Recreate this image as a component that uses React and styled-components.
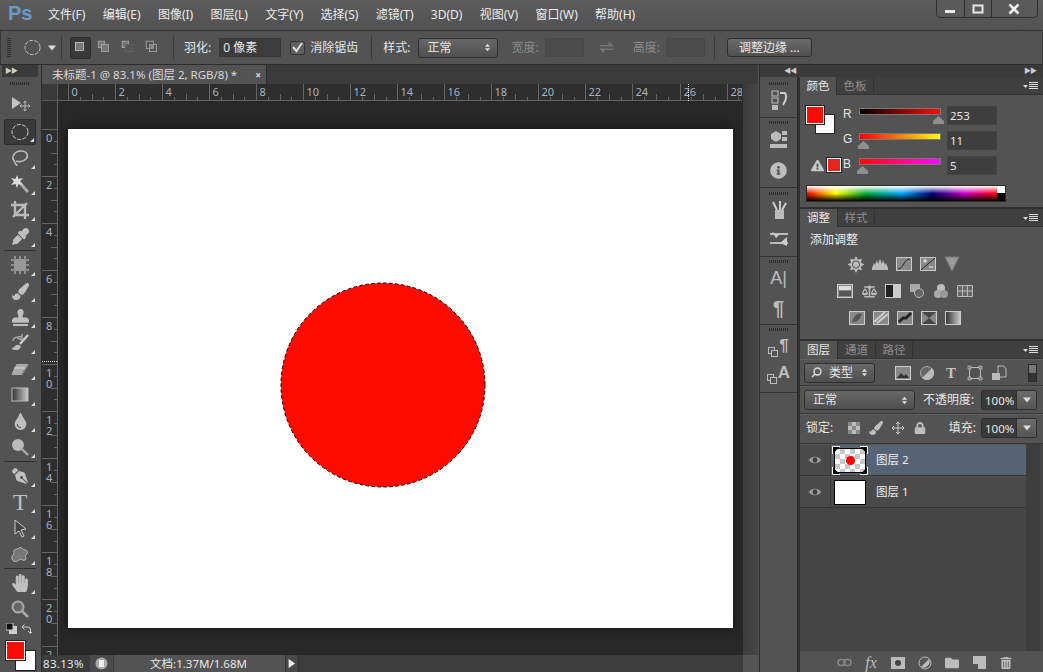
import React from "react";
import styled, { createGlobalStyle } from "styled-components";
import {
  FaStamp, FaEyeDropper, FaPaintBrush, FaTint, FaHandPaper, FaPenNib, FaInfoCircle,
  FaExclamationTriangle, FaLock, FaTrashAlt, FaFolder, FaSun, FaBalanceScale,
} from "react-icons/fa";

const FONT = `"Noto Sans", "Noto Sans CJK SC", sans-serif`;

const Global = createGlobalStyle`
  html, body { margin: 0; padding: 0; background: #535353; overflow: hidden; }
  * { box-sizing: border-box; }
`;

const App_ = styled.div`
  width: 1043px; height: 672px; display: flex; flex-direction: column;
  background: #535353; color: #e6e6e6; font: 12px/16px ${FONT}; overflow: hidden;
`;
const MenuBar = styled.div`
  height: 31px; display: flex; align-items: flex-start; flex: none;
  background: linear-gradient(#5c5c5c, #525252); border-bottom: 1px solid #333;
`;
const Logo = styled.div`
  width: 48px; padding: 1px 0 0 8px; font: bold 20px/24px "Liberation Sans", sans-serif; color: #6a9bcb;
`;
const MenuList = styled.div`display: flex; gap: 17.3px; padding-top: 7px;`;
const MenuItem = styled.span`white-space: nowrap; font-size: 12px; color: #ececec;`;
const WinControls = styled.div`
  margin-left: auto; margin-right: 5px; width: 102px; height: 18px; display: flex;
  border: 1px solid #2e2e2e; border-top: 0; border-radius: 0 0 5px 5px; background: #5a5a5a;
`;
const WinBtn = styled.div`
  flex: ${p => p.$grow || 1}; display: flex; align-items: center; justify-content: center;
  & + & { border-left: 1px solid #2e2e2e; }
`;

const OptionsBar = styled.div`
  height: 34px; flex: none; display: flex; align-items: center; padding-left: 6px;
  border-bottom: 1px solid #2c2c2c; border-left: 1px solid #3a3a3a; border-right: 1px solid #3a3a3a; background: #535353;
`;
const Grip = styled.div`
  width: 4px; height: 19px; flex: none;
  background: repeating-linear-gradient(#2f2f2f 0 1px, transparent 1px 2px);
`;
const Gap = styled.div`width: ${p => p.$w}px; flex: none;`;
const OptSep = styled.div`width: 1px; height: 23px; background: #3a3a3a; flex: none; margin: 0 ${p => p.$r ?? 11}px 0 ${p => p.$l ?? 11}px;`;
const ModeBtn = styled.div`
  width: ${p => p.$w || 24}px; height: 22px; display: flex; align-items: center; justify-content: center; flex: none;
  border-radius: 2px;
  ${p => p.$on && "background:#3a3a3a; border:1px solid #2e2e2e;"}
`;
const OptLabel = styled.span`
  white-space: nowrap; flex: none; color: ${p => p.$dim ? "#8c8c8c" : "#e6e6e6"};
  margin-right: ${p => p.$mr ?? 7}px;
`;
const OptInput = styled.div`
  width: ${p => p.$w}px; height: 19px; flex: none; padding-left: 3px; line-height: 18px;
  background: ${p => p.$dim ? "#4c4c4c" : "#3c3c3c"}; border: 1px solid ${p => p.$dim ? "#484848" : "#383838"};
`;
const CheckBox = styled.div`
  width: 15px; height: 14px; flex: none; background: #5f5f5f; border: 1px solid #333; border-radius: 2px; margin-right: 5px;
  display: flex; align-items: center; justify-content: center;
`;
const SelectBox = styled.div`
  width: ${p => p.$w}px; height: ${p => p.$h || 20}px; flex: none; display: flex; align-items: center; justify-content: space-between;
  padding: 0 ${p => p.$pr ?? 5}px 0 ${p => p.$pl ?? 8}px; border: 1px solid #2e2e2e; border-radius: 3px;
  background: linear-gradient(#686868, #4e4e4e);
`;
const Button = styled.div`
  width: 85px; height: 19px; flex: none; text-align: center; line-height: 17px; border: 1px solid #2e2e2e; border-radius: 3px;
  background: linear-gradient(#6c6c6c, #505050);
`;

const Workspace = styled.div`flex: 1; display: flex; min-height: 0;`;

const ToolColumn = styled.div`
  width: 42px; flex: none; display: flex; flex-direction: column; align-items: stretch;
  padding: 0 3px 0 2px; border-right: 1px solid #2c2c2c; background: #535353;
`;
const Collapse = styled.div`
  height: 12px; flex: none; background: #3a3a3a; display: flex; align-items: center; padding-left: 3px;
  color: #ccc; font-size: 7px; letter-spacing: -1px; line-height: 8px;
`;
const HGrip = styled.div`
  height: 3px; width: ${p => p.$w || 20}px; margin: ${p => p.$m || "5px auto 6px"}; flex: none;
  background: repeating-linear-gradient(90deg, #2c2c2c 0 1px, transparent 1px 2px);
`;
const ToolBtn = styled.div`
  position: relative; height: 26px; flex: none; display: flex; align-items: center; justify-content: center; color: #c0c0c0;
  margin: 0 2px; border-radius: 2px;
  ${p => p.$on && "background:#3a3a3a; border:1px solid #2e2e2e; margin-top: 2px;"}
  ${p => p.$more && `&::after { content:""; position:absolute; right:1px; bottom:2px; border-style:solid; border-width:0 0 4px 4px; border-color: transparent transparent #dcdcdc transparent; }`}
`;
const ToolSep = styled.div`height: 1px; background: #2e2e2e; margin: 1px 2px 1px; flex: none;`;
const ToolText = styled.span`font: 24px/26px "Liberation Serif", serif; color: #c0c0c0;`;
const MiniRow = styled.div`display: flex; justify-content: space-between; padding: 1px 6px 0 4px; flex: none; height: 14px;`;
const ColorStack = styled.div`position: relative; height: 30px; margin: 5px 0 0 4px; flex: none;`;
const Swatch = styled.div`
  position: absolute; left: ${p => p.$x}px; top: ${p => p.$y}px; width: ${p => p.$s}px; height: ${p => p.$s}px;
  background: ${p => p.$c}; border: 1px solid ${p => p.$bc || "#fff"}; outline: 1px solid #222;
`;

const DocColumn = styled.div`flex: 1; min-width: 0; display: flex; flex-direction: column; background: #3a3a3a;`;
const TabBar = styled.div`height: 19px; flex: none; display: flex; background: #3b3b3b;`;
const DocTab = styled.div`
  width: 225px; padding: 0 5px 0 10px; display: flex; justify-content: space-between; align-items: center; background: #535353;
  color: #d8d8d8; white-space: nowrap; font-size: 11.5px; border-right: 1px solid #2c2c2c;
`;
const CloseX = styled.span`font-size: 10px; color: #ddd; font-weight: bold;`;
const RulerRow = styled.div`height: 17px; flex: none; display: flex; background: #2e2e2e;`;
const RulerCorner = styled.div`
  width: 16px; flex: none; background: #3a3a3a; border-right: 1px solid #555; border-bottom: 1px solid #555;
`;
const MidRow = styled.div`flex: 1; min-height: 0; display: flex;`;
const CanvasArea = styled.div`
  flex: 1; background: #282828; padding: 28px 10px 0; overflow: hidden;
`;
const Page = styled.svg`display: block; width: 665px; height: 499px; background: #fff; box-shadow: 0 0 10px #111;`;
const Scroll = styled.div`width: 15px; flex: none; background: linear-gradient(90deg, #3c3c3c, #464646); margin-top: -17px;`;
const StatusBar = styled.div`height: 17px; flex: none; display: flex; background: #3c3c3c; align-items: stretch;`;
const ZoomField = styled.div`width: 48px; padding-left: 1px; line-height: 17px; color: #e4e4e4; font-size: 11.5px; background: #3c3c3c; font-family: ${FONT}; letter-spacing: .3px;`;
const StatusIcon = styled.div`width: 23px; background: #4a4a4a; display: flex; align-items: center; justify-content: center;`;
const StatusInfo = styled.div`
  width: 172px; text-align: center; line-height: 17px; background: #535353; font-size: 11.5px; color: #e6e6e6; padding-right: 2px;
  border-left: 1px solid #3c3c3c;
`;
const StatusArrow = styled.div`width: 12px; background: #4a4a4a; display: flex; align-items: center; justify-content: center; border-left: 1px solid #333;`;
const StatusCorner = styled.div`width: 15px; margin-left: auto; background: #555;`;

const DockArea = styled.div`width: 284px; flex: none; display: flex; flex-direction: column; background: #2f2f2f; border-left: 1px solid #2c2c2c; margin-left: 1px;`;
const DockHead = styled.div`
  height: 12px; flex: none; background: #3a3a3a; display: flex; justify-content: space-between; align-items: center; padding: 0 7px 0 24px;
  color: #ccc; font-size: 7px; letter-spacing: -1px; line-height: 8px;
`;
const DockBody = styled.div`flex: 1; min-height: 0; display: flex; gap: 2px;`;
const DockColumn = styled.div`width: 38px; flex: none; display: flex; flex-direction: column; background: #535353; border-right: 1px solid #2c2c2c;`;
const DockGroup = styled.div`
  height: ${p => p.$h}px; flex: none; padding-top: ${p => p.$pt ?? 3}px; border-bottom: 1px solid #333; display: flex; flex-direction: column; align-items: center;
  color: #bdbdbd;
`;
const DockIcon = styled.div`height: ${p => p.$h || 24}px; display: flex; align-items: ${p => p.$end ? "flex-end" : "center"}; justify-content: center; color: #bdbdbd; flex: none;`;
const DockText = styled.span`font: ${p => p.$w || "normal"} ${p => p.$s || 18}px/24px "Liberation Sans", sans-serif; color: #bdbdbd;`;
const VGap = styled.div`height: ${p => p.$h}px; flex: none;`;

const PanelColumn = styled.div`flex: 1; min-width: 0; display: flex; flex-direction: column; gap: 2px; background: #2f2f2f;`;
const Panel = styled.section`
  height: ${p => p.$h ? p.$h + "px" : "auto"}; flex: ${p => p.$h ? "none" : 1}; min-height: 0; display: flex; flex-direction: column; background: #535353;
`;
const Tabs = styled.div`height: 18px; flex: none; display: flex; background: #3f3f3f; border-bottom: 1px solid #333; position: relative;`;
const Tab = styled.div`
  width: ${p => p.$w || 37}px; text-align: center; line-height: 17px; font-size: 11.5px; border-right: 1px solid #333;
  ${p => p.$on ? "background:#535353; color:#e6e6e6; height:18px;" : "color:#8f8f8f;"}
`;
const PanelMenu = styled.div`margin-left: auto; margin-right: 4px; display: flex; align-items: center;`;

const ColorBody = styled.div`flex: 1; padding: 11px 0 0 6px; display: flex; flex-direction: column;`;
const ColorTop = styled.div`display: flex; height: 73px;`;
const ColorSide = styled.div`width: 37px; flex: none; display: flex; flex-direction: column; justify-content: space-between; padding-bottom: 7px;`;
const ColorPair = styled.div`position: relative; height: 30px;`;
const WarnRow = styled.div`display: flex; align-items: center; justify-content: flex-end; gap: 3px; padding-right: 2px; color: #c8c8c8;`;
const SmallSwatch = styled.div`width: 14px; height: 14px; background: #e8231c; border: 1px solid #fff; outline: 1px solid #222;`;
const Channels = styled.div`flex: 1; display: flex; flex-direction: column; gap: 6px;`;
const Channel = styled.div`display: flex; height: 19px; align-items: flex-start;`;
const ChLabel = styled.span`width: 16px; flex: none; font: 12px/16px "Liberation Sans", sans-serif; color: #e6e6e6;`;
const SliderWrap = styled.div`position: relative; width: 82px; height: 7px; margin-top: 2px; flex: none;`;
const SliderBar = styled.div`height: 7px; border: 1px solid #777; background: ${p => p.$bg};`;
const Thumb = styled.svg`position: absolute; top: 8px; width: 11px; height: 8px;`;
const NumInput = styled.div`
  width: 50px; height: 19px; margin-left: 6px; flex: none; background: #3e3e3e; border: 1px solid #444; padding-left: 2px; line-height: 17px;
  font-size: 11.5px;
`;
const Spectrum = styled.div`
  width: 200px; height: 17px; margin-top: 6px; display: flex; border: 1px solid #2c2c2c;
`;
const SpectrumHue = styled.div`
  flex: 1;
  background: linear-gradient(#0000 50%, #000f),
    linear-gradient(#ffff, #fff0 50%),
    linear-gradient(90deg, #f00 0, #ff0 15%, #0a3 31%, #0af 50%, #007 66%, #c0c 83%, #f00 100%);
`;
const SpectrumEnd = styled.div`width: 8px; background: linear-gradient(#fff 50%, #000 50%);`;

const AdjustTitle = styled.div`padding: 5px 0 0 10px; height: 29px; flex: none; font-size: 12px; color: #eee;`;
const AdjustRow = styled.div`
  display: flex; gap: 8px; margin-bottom: 11px; color: #bdbdbd; padding-left: ${p => p.$pl || 0}px; height: 16px; align-items: center;
`;
const AdjIcon = styled.div`width: 16px; height: 16px; display: flex; align-items: center; justify-content: center; flex: none;`;

const LayerRowBar = styled.div`
  height: ${p => p.$h || 28}px; flex: none; display: flex; align-items: center; padding: 0 6px ${p => p.$pb || 0}px 4px; border-bottom: 1px solid #383838; border-top: 1px solid #606060;
`;
const FilterIcons = styled.div`display: flex; gap: 8px; margin-left: 20px; color: #bdbdbd;`;
const Toggle = styled.div`margin-left: auto; width: 9px; height: 18px; background: linear-gradient(#777 50%, #333 50%); border: 1px solid #2a2a2a;`;
const Spacer = styled.div`flex: 1;`;
const LabelPad = styled.span`padding-left: ${p => p.$l || 0}px; margin-right: ${p => p.$r || 0}px; white-space: nowrap;`;
const Field = styled.div`
  width: 56px; height: 20px; flex: none; display: flex; border: 1px solid #2e2e2e; border-radius: 2px; overflow: hidden;
`;
const FieldValue = styled.div`flex: 1; background: #3a3a3a; line-height: 19px; padding-left: 3px; font-size: 11.5px;`;
const FieldDrop = styled.div`width: 20px; background: linear-gradient(#6c6c6c, #555); display: flex; align-items: center; justify-content: center; border-left: 1px solid #2e2e2e;`;
const LockIcons = styled.div`display: flex; gap: 6px; margin-left: 13px; color: #bdbdbd; align-items: center;`;

const LayerWrap = styled.div`flex: 1; min-height: 0; display: flex; background: #454545; padding-right: 17px; position: relative;`;
const ScrollGutter = styled.div`position: absolute; right: 3px; top: 0; bottom: 0; width: 14px; background: #3d3d3d;`;
const LayerList = styled.div`flex: 1; display: flex; flex-direction: column;`;
const LayerRow = styled.div`
  height: 32px; flex: none; display: flex; align-items: center; border-bottom: 1px solid #333; border-top: 1px solid #555;
  background: ${p => p.$on ? "#566375" : "#4a4a4a"};
`;
const EyeCell = styled.div`width: 31px; height: 100%; display: flex; align-items: center; justify-content: center; border-right: 1px solid #3a3a3a; flex: none; background: #4a4a4a;`;
const Thumbnail = styled.div`
  position: relative; width: 32px; height: 25px; margin: 0 10px 0 3px; border: 1px solid #000; flex: none; display: flex; align-items: center; justify-content: center;
  background: ${p => p.$check ? "repeating-conic-gradient(#c8c8c8 0 25%, #fff 0 50%) 0 0 / 10px 10px" : "#fff"};
`;
const Corners = styled.svg`position: absolute; left: -3px; top: -3px; width: 36px; height: 29px;`;
const Dot = styled.div`width: 9px; height: 9px; border-radius: 50%; background: #f00;`;
const LayerName = styled.span`font-size: 11.5px; color: #eee;`;
const Footer = styled.div`
  height: 19px; flex: none; display: flex; align-items: center; gap: 9px; padding-left: 35px; margin-top: 2px; background: #535353; color: #bdbdbd;
`;
const FootBtn = styled.div`width: 18px; height: 18px; display: flex; align-items: center; justify-content: center; font: italic 16px "Liberation Serif", serif; color: #bdbdbd;`;

const G = ({ s = 20, vb = "0 0 20 20", children, ...r }) => (
  <svg width={s} height={s} viewBox={vb} fill="none" {...r}>{children}</svg>
);

const UpDown = () => (
  <G s={9} vb="0 0 9 12"><path d="M1 5 4.500 1 8 5ZM1 7h7l-3.500 4Z" fill="#ddd" /></G>
);
const Caret = ({ c = "#ddd" }) => <G s={8} vb="0 0 8 5"><path d="M0 0h8L4 5Z" fill={c} /></G>;
const MenuGlyph = () => (
  <G s={16} vb="0 0 16 8">
    <path d="M0 3h5L2.500 6Z" fill="#ddd" /><path d="M6 .5h9M6 2.500h9M6 4.500h9M6 6.500h9" stroke="#ddd" />
  </G>
);
const Eye = () => (
  <G s={14} vb="0 0 15 10">
    <path d="M1 5C3 1 12 1 14 5 12 9 3 9 1 5Z" fill="#a0a0a0" stroke="#8a8a8a" /><circle cx="7.500" cy="5" r="2.600" fill="#3a3a3a" />
  </G>
);
const Ellipse = ({ s = 20 }) => (
  <G s={s}><ellipse cx="10" cy="10" rx="8" ry="7.500" stroke="#d0d0d0" strokeDasharray="4 1.500" /></G>
);

const modeIcons = [
  <G s={16} key="a"><rect x="3" y="3" width="10" height="10" fill="#777" stroke="#ccc" /></G>,
  <G s={16} key="b"><rect x="1.500" y="1.500" width="8" height="8" fill="#777" stroke="#aaa" /><rect x="5.500" y="5.500" width="9" height="9" fill="#777" stroke="#aaa" /></G>,
  <G s={16} key="c"><rect x="1.500" y="1.500" width="8" height="8" fill="#777" stroke="#aaa" /><rect x="5.500" y="5.500" width="9" height="9" fill="#535353" stroke="#666" /></G>,
  <G s={16} key="d"><rect x="1.500" y="1.500" width="9" height="9" stroke="#aaa" /><rect x="5.500" y="5.500" width="9" height="9" stroke="#aaa" /><rect x="5.500" y="5.500" width="5" height="5" fill="#888" /></G>,
];

const tools = [
  { i: <G s={22} vb="0 0 22 20"><path d="M3 3v12l9-6Z" fill="#c4c4c4" /><path d="M16 7v10M11 12h10M14.500 8.500 16 7l1.500 1.500M14.500 15.500 16 17l1.500-1.500M12.500 10.500 11 12l1.500 1.500M19.500 10.500 21 12l-1.500 1.500" stroke="#bbb" /></G> },
  { i: <Ellipse />, on: 1, more: 1 },
  { i: <G><path d="M5 14C0 9 5 3 11 3s8 5 5 8-8 3-10 2M5 14c-1 2 2 2 2 4" stroke="#bbb" strokeWidth="1.600" /></G>, more: 1 },
  { i: <G><path d="M10 9 18 18" stroke="#aaa" strokeWidth="3" /><path d="M7 1 8.500 5 13 4 10 7.500 13 11 8.500 10 7 14 5.500 10 1 11 4 7.500 1 4 5.500 5Z" fill="#ddd" /></G>, more: 1 },
  { i: <G><path d="M5 1v14h14M1 5h14v14M17 3 3 17" stroke="#bbb" strokeWidth="2.400" /></G>, more: 1 },
  { i: <FaEyeDropper size={17} />, more: 1 },
  { sep: 1 },
  { i: <G><rect x="4" y="4" width="12" height="12" rx="2" fill="#999" /><path d="M1 5h3M1 10h3M1 15h3M16 5h3M16 10h3M16 15h3M5 1v3M10 1v3M15 1v3M5 16v3M10 16v3M15 16v3" stroke="#ccc" /></G>, more: 1 },
  { i: <FaPaintBrush size={17} />, more: 1 },
  { i: <FaStamp size={17} />, more: 1 },
  { i: <G><path d="M8 17c-4 0-6 0-6-2 3 0 3-4 7-3s0 5-1 5Z" fill="#bbb" /><path d="M10 11 18 2" stroke="#ccc" strokeWidth="2.400" /><path d="M3 8c0-4 6-5 9-4M12 1v6L7 5" stroke="#aaa" strokeWidth="1.400" /></G>, more: 1 },
  { i: <G><path d="M7 5h10q2 0 1 2l-5 8q-1 1-3 1H3q-2 0-1-2l4-8q.5-1 1-1Z" fill="#aaa" /><path d="M18 6l-6 9" stroke="#666" strokeWidth=".8" /><path d="M4 9h11" stroke="#ddd" /></G>, more: 1 },
  { i: <G><rect x="2" y="3" width="16" height="13" fill="url(#grad)" stroke="#bbb" /><defs><linearGradient id="grad"><stop stopColor="#333" /><stop offset="1" stopColor="#ccc" /></linearGradient></defs></G>, more: 1 },
  { i: <FaTint size={17} />, more: 1 },
  { i: <G><circle cx="8" cy="8" r="6" fill="#bbb" /><path d="M12 12 18 18" stroke="#aaa" strokeWidth="2.400" /></G>, more: 1 },
  { sep: 1 },
  { i: <FaPenNib size={16} style={{ transform: "scaleX(-1)" }} />, more: 1 },
  { i: <ToolText>T</ToolText>, more: 1 },
  { i: <G><path d="M5 2v14l4-3 3 6 2-1-3-6 5-1Z" fill="#444" stroke="#ccc" /></G>, more: 1 },
  { i: <G><path d="M2 15c-1-4 3-4 2-7s3-2 5-4c3-2 3 2 6 2s3 3 1 5 2 4-1 5-4-2-6 0-6 2-7-1Z" fill="#777" stroke="#bbb" /></G>, more: 1 },
  { sep: 1 },
  { i: <FaHandPaper size={18} />, more: 1 },
  { i: <G><circle cx="8" cy="8" r="5.500" fill="#666" stroke="#aaa" strokeWidth="2" /><path d="M12 12 18 18" stroke="#aaa" strokeWidth="2.600" /></G> },
];

const menu = ["文件(F)", "编辑(E)", "图像(I)", "图层(L)", "文字(Y)", "选择(S)", "滤镜(T)", "3D(D)", "视图(V)", "窗口(W)", "帮助(H)"];

const HRuler = () => {
  const els = [];
  for (let i = 0; i <= 59; i++) {
    const x = 10 + i * 11.76;
    if (x > 684) break;
    const rx = Math.round(x) + 0.5;
    if (i % 4 === 0) {
      els.push(<path key={i} d={`M${rx} 0V17`} stroke="#666" />);
      els.push(<text key={"t" + i} x={rx + 3} y={12} fontSize="11" fill="#a8b4c0" fontFamily="Noto Sans">{i / 2}</text>);
    } else {
      els.push(<path key={i} d={`M${rx} ${i % 2 ? 13 : 10}V17`} stroke="#666" />);
    }
  }
  return (
    <svg width="684" height="17" style={{ display: "block", flex: "none" }}>
      <path d="M0 16.500H684" stroke="#666" />
      {els}
      <path d="M630.500 0V17" stroke="#ddd" strokeDasharray="1 1" />
    </svg>
  );
};
const VRuler = () => {
  const els = [];
  for (let i = 0; i <= 45; i++) {
    const y = 28 + i * 11.76;
    if (y > 556) break;
    const ry = Math.round(y) + 0.5;
    if (i % 4 === 0) {
      els.push(<path key={i} d={`M0 ${ry}H16`} stroke="#666" />);
      String(i / 2).split("").forEach((d, k) => {
        els.push(<text key={"t" + i + k} x={4} y={ry + 12 + k * 11} fontSize="11" fill="#a8b4c0" fontFamily="Noto Sans">{d}</text>);
      });
    } else {
      els.push(<path key={i} d={`M${i % 2 ? 12 : 9} ${ry}H16`} stroke="#666" />);
    }
  }
  return (
    <svg width="16" height="554" style={{ display: "block", flex: "none", background: "#2e2e2e" }}>
      <path d="M15.500 0V554" stroke="#666" />
      {els}
      <path d="M0 260.500H16" stroke="#ddd" strokeDasharray="1 1" />
    </svg>
  );
};

const House = () => <path d="M0 8V5L5.500 0 11 5V8Z" fill="#8f8f8f" />;

const channels = [
  ["R", "linear-gradient(90deg,#000,#fd0b05)", "253", 74],
  ["G", "linear-gradient(90deg,#fd0000,#fd0b05 5%,#fdff05)", "11", -1],
  ["B", "linear-gradient(90deg,#fd0b00,#fd0bff)", "5", -2],
];

const s16 = (kids) => <G s={16} vb="0 0 16 16">{kids}</G>;
const Box = ({ children }) => s16(<><rect x=".5" y="1.500" width="15" height="13" fill="#888" stroke="#ccc" />{children}</>);
const Stack = ({ children }) => (
  <>
    <G s={11} vb="0 0 11 11"><rect x=".5" y=".5" width="6" height="6" stroke="#bbb" /><rect x="3.500" y="3.500" width="6" height="6" fill="#535353" stroke="#bbb" /></G>
    {children}
  </>
);

const adjustRows = [
  [48, <FaSun size={17} key="1" />,
    s16(<path d="M0 12 2 7 3 9 5 4 6 8 8 3 10 8 11 4 13 9 14 7 16 12V14H0Z" fill="#bbb" />),
    <Box key="3"><path d="M2 13C7 13 8 3 14 3" stroke="#222" /></Box>,
    <Box key="4"><path d="M1 14 15 2" stroke="#222" /><path d="M3 5h4M5 3v4M9 11h4" stroke="#eee" /></Box>,
    s16(<path d="M1 1H15L8 15Z" fill="#999" stroke="#777" />)],
  [37, <Box key="1"><rect x="2" y="3" width="12" height="4" fill="#ddd" /><rect x="2" y="8" width="12" height="5" fill="#555" /></Box>,
    <FaBalanceScale size={15} key="2" />,
    s16(<><rect x=".5" y="1.500" width="15" height="13" fill="#222" stroke="#ccc" /><rect x="8" y="2" width="7" height="12" fill="#ccc" /></>),
    s16(<><rect x="1" y="1" width="10" height="8" fill="#aaa" /><circle cx="10" cy="10" r="4.500" stroke="#bbb" fill="#666" /></>),
    s16(<><circle cx="8" cy="5" r="4" fill="#bbb" /><circle cx="5" cy="11" r="4" fill="#aaa" /><circle cx="11" cy="11" r="4" fill="#999" /></>),
    s16(<path d="M.5 2.500h15v11H.5ZM5.500 2.500v11M10.500 2.500v11M.5 8h15" stroke="#bbb" fill="#666" />)],
  [49, <Box key="1"><path d="M3 12C5 5 9 2 13 4 11 9 8 13 3 12Z" fill="#555" /></Box>,
    <Box key="2"><path d="M1 12 12 2M4 13 15 4" stroke="#ccc" strokeWidth="2" /></Box>,
    <Box key="3"><path d="M2 12 6 8H9L14 3" stroke="#222" strokeWidth="3" /></Box>,
    <Box key="4"><path d="M1 2 8 8 15 2ZM1 14 8 8 15 14Z" fill="#444" /></Box>,
    s16(<rect x=".5" y="1.500" width="15" height="13" fill="url(#g2)" stroke="#ccc" />)],
];

export default function App() {
  return (
    <App_>
      <Global />
      <MenuBar>
        <Logo>Ps</Logo>
        <MenuList>{menu.map(m => <MenuItem key={m}>{m}</MenuItem>)}</MenuList>
        <WinControls>
          <WinBtn $grow={28}><G s={12} vb="0 0 12 12"><path d="M1 7h10v3H1Z" fill="#e8e8e8" /></G></WinBtn>
          <WinBtn $grow={27}><G s={12} vb="0 0 12 12"><rect x="1.500" y="2.500" width="9" height="7" stroke="#e8e8e8" strokeWidth="2" /></G></WinBtn>
          <WinBtn $grow={47}><G s={12} vb="0 0 12 12"><path d="M1.500 1.500 10.500 10.500M10.500 1.500 1.500 10.500" stroke="#eee" strokeWidth="2.600" /></G></WinBtn>
        </WinControls>
      </MenuBar>

      <OptionsBar>
        <Grip />
        <Gap $w={12} />
        <Ellipse s={19} />
        <Gap $w={6} />
        <Caret />
        <OptSep $l={5} $r={8} />
        <ModeBtn $on $w={21}>{modeIcons[0]}</ModeBtn>
        <Gap $w={2} />
        {modeIcons.slice(1).map((m, i) => <ModeBtn key={i}>{m}</ModeBtn>)}
        <OptSep $l={8} $r={10} />
        <OptLabel $mr={8}>羽化:</OptLabel>
        <OptInput $w={62}>0 像素</OptInput>
        <Gap $w={9} />
        <CheckBox><G s={13} vb="0 0 13 13"><path d="M2 6 5.500 10 11 2" stroke="#ddd" strokeWidth="2" /></G></CheckBox>
        <OptLabel $mr={0}>消除锯齿</OptLabel>
        <OptSep $l={13} />
        <OptLabel $mr={8}>样式:</OptLabel>
        <SelectBox $w={80}><span>正常</span><UpDown /></SelectBox>
        <Gap $w={13} />
        <OptLabel $dim $mr={6}>宽度:</OptLabel>
        <OptInput $w={39} $dim />
        <Gap $w={15} />
        <G s={15} vb="0 0 15 14"><path d="M1 5h9V2l4 3.500H1M14 9H5v3L1 8.500h13" fill="#777" stroke="#777" /></G>
        <Gap $w={19} />
        <OptLabel $dim $mr={6}>高度:</OptLabel>
        <OptInput $w={39} $dim />
        <OptSep $l={9} $r={12} />
        <Button>调整边缘 ...</Button>
      </OptionsBar>

      <Workspace>
        <ToolColumn>
          <Collapse>▶▶</Collapse>
          <HGrip />
          {tools.map((t, k) => t.sep
            ? <ToolSep key={k} />
            : <ToolBtn key={k} $on={t.on} $more={t.more}>{t.i}</ToolBtn>)}
          <MiniRow>
            <G s={11} vb="0 0 11 11"><rect x="3" y="3" width="8" height="8" fill="#ccc" /><rect x="0" y="0" width="7" height="7" fill="#111" stroke="#ccc" /></G>
            <G s={11} vb="0 0 11 11"><path d="M1 4 3.500 1.500M1 4 3.500 6.500M1 4H7Q9.500 4 9.500 7V10M7 8l2.500 2.500L12 8" stroke="#ccc" /></G>
          </MiniRow>
          <ColorStack>
            <Swatch $x={10} $y={10} $s={19} $c="#fff" $bc="#fff" />
            <Swatch $x={0} $y={0} $s={19} $c="#fd0b05" />
          </ColorStack>
        </ToolColumn>

        <DocColumn>
          <TabBar>
            <DocTab><span>未标题-1 @ 83.1% (图层 2, RGB/8) *</span><CloseX>×</CloseX></DocTab>
          </TabBar>
          <RulerRow>
            <RulerCorner />
            <HRuler />
          </RulerRow>
          <MidRow>
            <VRuler />
            <CanvasArea>
              <Page viewBox="0 0 665 499">
                <circle cx="315" cy="256" r="102" fill="#fe0b00" />
                <circle cx="315" cy="256" r="102" fill="none" stroke="#000" strokeDasharray="3.500 2.500" />
              </Page>
            </CanvasArea>
            <Scroll />
          </MidRow>
          <StatusBar>
            <ZoomField>83.13%</ZoomField>
            <StatusIcon><G s={13} vb="0 0 13 13"><circle cx="6.500" cy="6.500" r="6" fill="#aaa" /><path d="M4 3h5v7H4Z" fill="#eee" /></G></StatusIcon>
            <StatusInfo>文档:1.37M/1.68M</StatusInfo>
            <StatusArrow><G s={9} vb="0 0 9 11"><path d="M1 0 9 5.500 1 11Z" fill="#eee" /></G></StatusArrow>
            <StatusCorner />
          </StatusBar>
        </DocColumn>

        <DockArea>
          <DockHead><span>◀◀</span><span>▶▶</span></DockHead>
          <DockBody>
            <DockColumn>
              <DockGroup $h={41}>
                <HGrip $m="2px auto 3px" />
                <DockIcon><G><rect x="3" y="1" width="6" height="5" stroke="#bbb" /><rect x="3" y="8" width="6" height="5" stroke="#bbb" /><rect x="3" y="15" width="6" height="5" fill="#bbb" /><path d="M11 3h5q3 5-2 12" stroke="#ccc" strokeWidth="2" /></G></DockIcon>
              </DockGroup>
              <DockGroup $h={70} $pt={1}>
                <HGrip $m="2px auto 3px" />
                <DockIcon><G><path d="M2 5 7 2 12 5V10L7 13 2 10Z" fill="#bbb" /><rect x="13" y="2" width="5" height="4" fill="#bbb" /><rect x="13" y="8" width="5" height="4" fill="#bbb" /><rect x="1" y="15" width="17" height="4" fill="#bbb" /></G></DockIcon>
                <VGap $h={7} />
                <DockIcon><FaInfoCircle size={17} /></DockIcon>
              </DockGroup>
              <DockGroup $h={69} $pt={2}>
                <HGrip $m="2px auto 3px" />
                <DockIcon><G><path d="M6 10h9v9H6Z" fill="#bbb" /><path d="M8 10 4 2M11 10V1M13 10 17 3" stroke="#ccc" strokeWidth="2" /></G></DockIcon>
                <VGap $h={4} />
                <DockIcon><G><path d="M1 6h18M1 15h18" stroke="#bbb" strokeWidth="2" /><path d="M3 4l7 3-3 3ZM18 9v9l-7-3Z" fill="#ccc" /></G></DockIcon>
              </DockGroup>
              <DockGroup $h={68} $pt={1}>
                <HGrip $m="2px auto 3px" />
                <DockIcon><DockText>A|</DockText></DockIcon>
                <VGap $h={6} />
                <DockIcon><DockText $s={20} $w="bold">¶</DockText></DockIcon>
              </DockGroup>
              <DockGroup $h={68} $pt={1}>
                <HGrip $m="2px auto 3px" />
                <DockIcon $end><Stack><DockText $s={17} $w="bold">¶</DockText></Stack></DockIcon>
                <VGap $h={3} />
                <DockIcon $end><Stack><DockText $s={17} $w="bold">A</DockText></Stack></DockIcon>
              </DockGroup>
            </DockColumn>

            <PanelColumn>
              <Panel $h={130}>
                <Tabs>
                  <Tab $on>颜色</Tab><Tab>色板</Tab>
                  <PanelMenu><MenuGlyph /></PanelMenu>
                </Tabs>
                <ColorBody>
                  <ColorTop>
                    <ColorSide>
                      <ColorPair>
                        <Swatch $x={10} $y={9} $s={18} $c="#fff" />
                        <Swatch $x={0} $y={0} $s={18} $c="#fd0b05" />
                      </ColorPair>
                      <WarnRow><FaExclamationTriangle size={13} /><SmallSwatch /></WarnRow>
                    </ColorSide>
                    <Channels>
                      {channels.map(([l, bg, v, x]) => (
                        <Channel key={l}>
                          <ChLabel>{l}</ChLabel>
                          <SliderWrap>
                            <SliderBar $bg={bg} />
                            <Thumb viewBox="0 0 11 8" style={{ left: x }}><House /></Thumb>
                          </SliderWrap>
                          <NumInput>{v}</NumInput>
                        </Channel>
                      ))}
                    </Channels>
                  </ColorTop>
                  <Spectrum><SpectrumHue /><SpectrumEnd /></Spectrum>
                </ColorBody>
              </Panel>

              <Panel $h={130}>
                <svg width="0" height="0" style={{ position: "absolute" }}><defs><linearGradient id="g2"><stop stopColor="#333" /><stop offset="1" stopColor="#ccc" /></linearGradient></defs></svg>
                <Tabs>
                  <Tab $on $w={38}>调整</Tab><Tab>样式</Tab>
                  <PanelMenu><MenuGlyph /></PanelMenu>
                </Tabs>
                <AdjustTitle>添加调整</AdjustTitle>
                {adjustRows.map(([pl, ...r], i) => (
                  <AdjustRow key={i} $pl={pl}>{r.map((x, k) => <AdjIcon key={k}>{x}</AdjIcon>)}</AdjustRow>
                ))}
              </Panel>

              <Panel>
                <Tabs>
                  <Tab $on $w={38}>图层</Tab><Tab $w={38}>通道</Tab><Tab>路径</Tab>
                  <PanelMenu><MenuGlyph /></PanelMenu>
                </Tabs>
                <LayerRowBar $h={27}>
                  <SelectBox $w={71} $pl={6}>
                    <G s={11} vb="0 0 11 11"><circle cx="6.500" cy="4.500" r="3.500" stroke="#ddd" strokeWidth="1.400" /><path d="M4 7 1 10" stroke="#ddd" strokeWidth="1.600" /></G>
                    <span>类型</span><UpDown />
                  </SelectBox>
                  <FilterIcons>
                    <AdjIcon><Box><path d="M2 13 6 8 9 11 11 9 14 13Z" fill="#333" /></Box></AdjIcon>
                    <AdjIcon>{s16(<><circle cx="8" cy="8" r="6.500" fill="#666" stroke="#aaa" /><path d="M3 13 13 3A6.500 6.500 0 0 1 3 13Z" fill="#bbb" /></>)}</AdjIcon>
                    <AdjIcon><ToolText style={{ fontSize: 15, fontWeight: "bold", lineHeight: "16px" }}>T</ToolText></AdjIcon>
                    <AdjIcon>{s16(<><rect x="2.500" y="2.500" width="11" height="11" stroke="#bbb" /><path d="M1 1h3v3H1ZM12 1h3v3h-3ZM1 12h3v3H1ZM12 12h3v3h-3Z" fill="#777" stroke="#ccc" strokeWidth=".6" /></>)}</AdjIcon>
                    <AdjIcon>{s16(<><path d="M7 1h6l2 3v8H7Z" stroke="#bbb" /><rect x="1" y="8" width="8" height="7" fill="#bbb" /></>)}</AdjIcon>
                  </FilterIcons>
                  <Toggle />
                </LayerRowBar>
                <LayerRowBar>
                  <SelectBox $w={111}><span>正常</span><UpDown /></SelectBox>
                  <Gap $w={8} />
                  <LabelPad>不透明度:</LabelPad>
                  <Spacer />
                  <Field><FieldValue>100%</FieldValue><FieldDrop><Caret /></FieldDrop></Field>
                </LayerRowBar>
                <LayerRowBar $h={30} $pb={2}>
                  <LabelPad $l={2}>锁定:</LabelPad>
                  <LockIcons>
                    <AdjIcon><G s={12} vb="0 0 12 12"><path d="M0 0h4v4H0ZM8 0h4v4H8ZM4 4h4v4H4ZM0 8h4v4H0ZM8 8h4v4H8Z" fill="#888" /><path d="M4 0h4v4H4ZM0 4h4v4H0ZM8 4h4v4H8ZM4 8h4v4H4Z" fill="#bbb" /></G></AdjIcon>
                    <AdjIcon><FaPaintBrush size={14} /></AdjIcon>
                    <AdjIcon><G s={14} vb="0 0 14 14"><path d="M7 1v12M1 7h12M5 3l2-2 2 2M5 11l2 2 2-2M3 5 1 7l2 2M11 5l2 2-2 2" stroke="#ccc" /></G></AdjIcon>
                    <AdjIcon><FaLock size={12} /></AdjIcon>
                  </LockIcons>
                  <Spacer />
                  <LabelPad $r={5}>填充:</LabelPad>
                  <Field><FieldValue>100%</FieldValue><FieldDrop><Caret /></FieldDrop></Field>
                </LayerRowBar>
                <LayerWrap>
                  <ScrollGutter />
                  <LayerList>
                    <LayerRow $on>
                      <EyeCell><Eye /></EyeCell>
                      <Thumbnail $check>
                        <Dot />
                        <Corners viewBox="0 0 36 29"><path d="M.5 8V.5H8M28 .5h7.500V8M.5 21v7.500H8M28 28.500h7.500V21" stroke="#fff" /></Corners>
                      </Thumbnail>
                      <LayerName>图层 2</LayerName>
                    </LayerRow>
                    <LayerRow>
                      <EyeCell><Eye /></EyeCell>
                      <Thumbnail />
                      <LayerName>图层 1</LayerName>
                    </LayerRow>
                  </LayerList>
                </LayerWrap>
                <Footer>
                  <FootBtn><G s={15} vb="0 0 15 10"><rect x="1" y="2" width="7" height="6" rx="3" stroke="#888" strokeWidth="1.500" /><rect x="7" y="2" width="7" height="6" rx="3" stroke="#888" strokeWidth="1.500" /></G></FootBtn>
                  <FootBtn>fx</FootBtn>
                  <FootBtn><G s={14} vb="0 0 14 12"><rect width="14" height="12" fill="#bbb" /><circle cx="7" cy="6" r="3" fill="#444" /></G></FootBtn>
                  <FootBtn><G s={14} vb="0 0 14 14"><circle cx="7" cy="7" r="6" fill="#555" stroke="#bbb" /><path d="M3 11 11 3A6 6 0 0 1 3 11Z" fill="#bbb" /></G></FootBtn>
                  <FootBtn><FaFolder size={14} /></FootBtn>
                  <FootBtn><G s={13} vb="0 0 13 13"><path d="M0 0h13v13H5V8H0Z" fill="#bbb" /></G></FootBtn>
                  <FootBtn><FaTrashAlt size={12} /></FootBtn>
                </Footer>
              </Panel>
            </PanelColumn>
          </DockBody>
        </DockArea>
      </Workspace>
    </App_>
  );
}
